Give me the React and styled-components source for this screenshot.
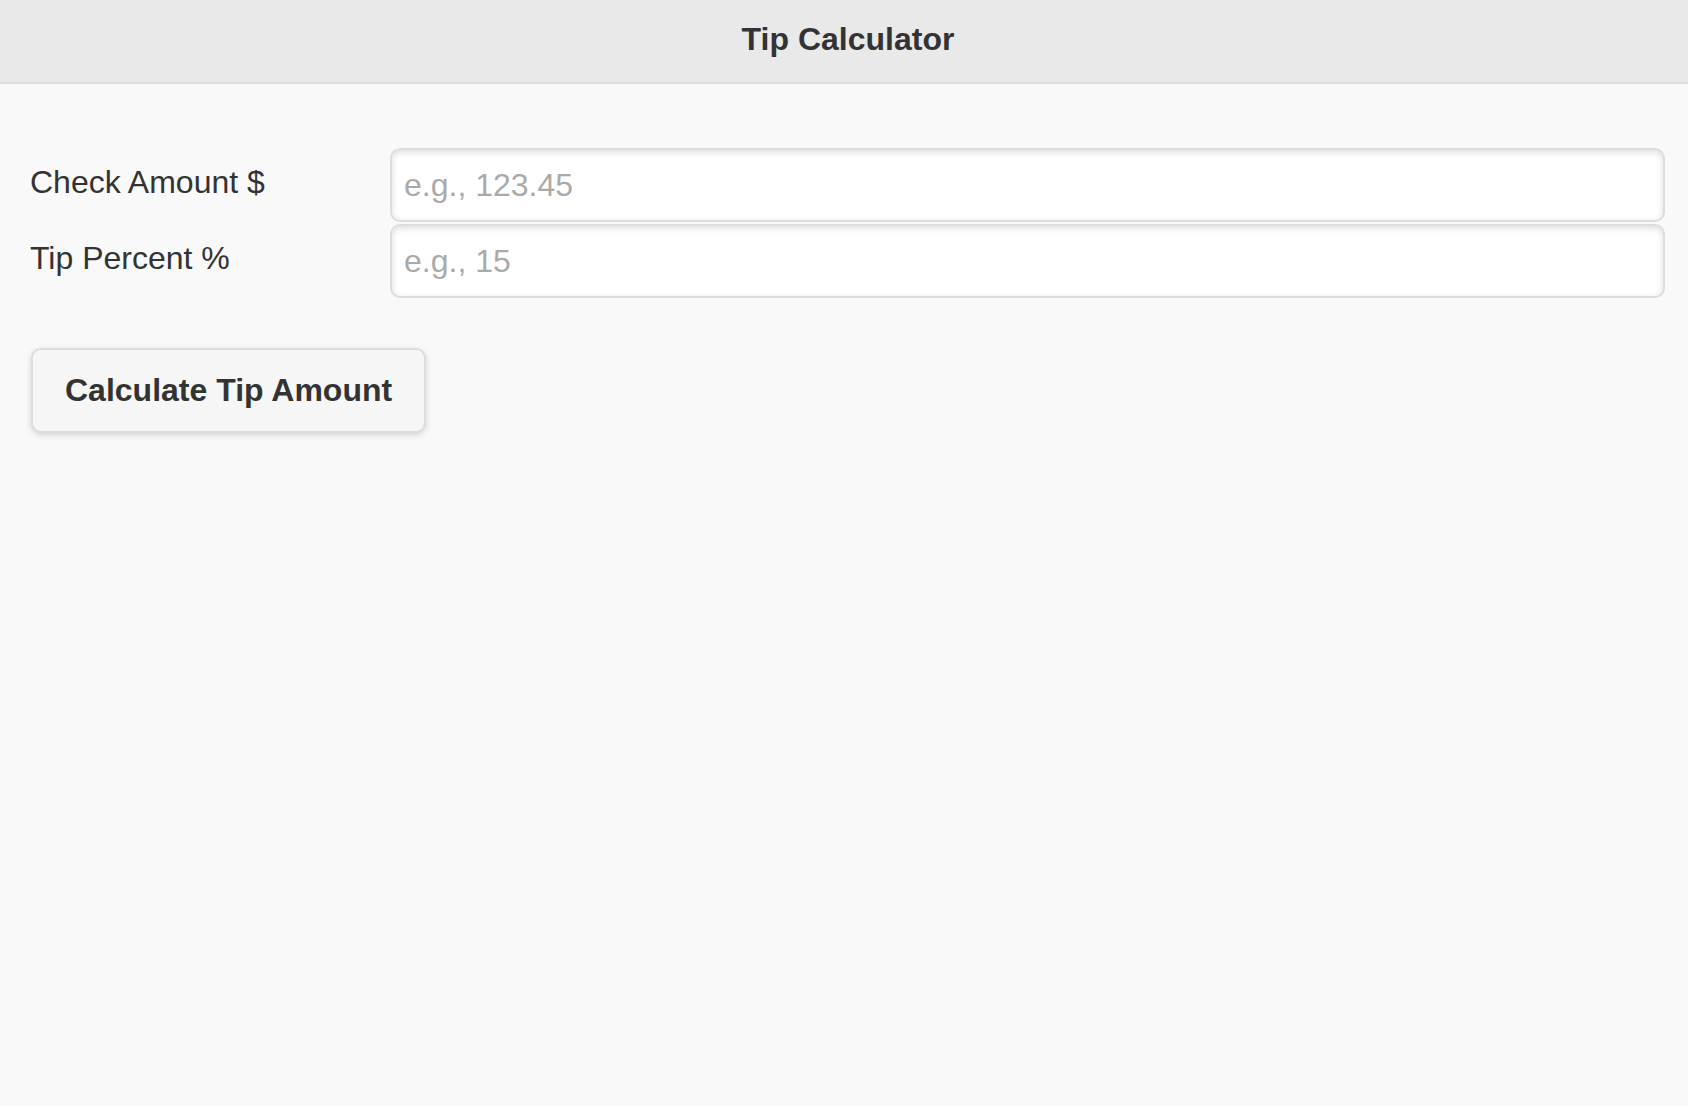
import styled, { createGlobalStyle } from 'styled-components'

const GlobalStyle = createGlobalStyle`
    html, body {
        margin: 0;
        padding: 0;
        background: #f9f9f9;
    }
    body {
        font-family: "Liberation Sans", Arial, Helvetica, sans-serif;
        color: #333;
    }
    * {
        box-sizing: border-box;
    }
`

const Page = styled.div`
    min-height: 1106px;
    background: #f9f9f9;
    display: flex;
    flex-direction: column;
`

const Header = styled.header`
    background: #e9e9e9;
    border-bottom: 2px solid #dddddd;
    padding: 21px 0 25px 8px;
    text-align: center;
`

const Title = styled.h1`
    margin: 0;
    font-size: 32px;
    line-height: 36px;
    font-weight: bold;
    color: #333;
`

const Content = styled.main`
    padding: 64px 23px 32px 30px;
    display: flex;
    flex-direction: column;
    gap: 50px;
`

const Form = styled.div`
    display: flex;
    flex-direction: column;
    gap: 2px;
`

const Field = styled.div`
    display: grid;
    grid-template-columns: 360px 1fr;
    align-items: start;
`

const Label = styled.label`
    font-size: 32px;
    line-height: 41px;
    padding-top: 14px;
    color: #333;
`

const Input = styled.input`
    height: 74px;
    width: 100%;
    padding: 0 12px;
    font-family: inherit;
    font-size: 32px;
    color: #333;
    background: #fff;
    border: 2px solid #dddddd;
    border-radius: 10px;
    box-shadow: inset 0 2px 6px rgba(0, 0, 0, 0.14);
    outline: none;

    &::placeholder {
        color: #aaaaaa;
    }
`

const Button = styled.button`
    align-self: flex-start;
    margin-left: 1px;
    padding: 20px 32px;
    font-family: inherit;
    font-size: 32px;
    line-height: 41px;
    font-weight: bold;
    color: #333;
    background: #f6f6f6;
    border: 2px solid #dddddd;
    border-radius: 10px;
    box-shadow: 0 2px 6px rgba(0, 0, 0, 0.15);
    cursor: pointer;
`

function App() {
    return (
        <Page>
            <GlobalStyle />
            <Header>
                <Title>Tip Calculator</Title>
            </Header>
            <Content>
                <Form>
                    <Field>
                        <Label htmlFor="check">Check Amount $</Label>
                        <Input id="check" type="text" placeholder="e.g., 123.45" />
                    </Field>
                    <Field>
                        <Label htmlFor="tip">Tip Percent %</Label>
                        <Input id="tip" type="text" placeholder="e.g., 15" />
                    </Field>
                </Form>
                <Button>Calculate Tip Amount</Button>
            </Content>
        </Page>
    )
}

export default App
